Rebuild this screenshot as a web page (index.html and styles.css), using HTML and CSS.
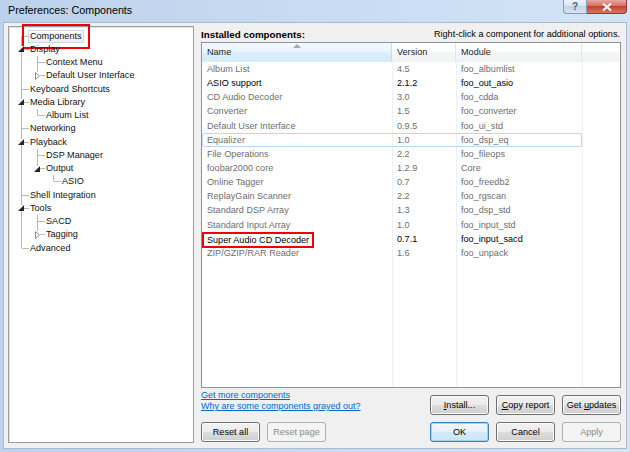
FILE: index.html
```html
<!DOCTYPE html>
<html>
<head>
<meta charset="utf-8">
<title>Preferences: Components</title>
<link rel="stylesheet" href="styles.css">
</head>
<body>
<div class="window">
  <div class="titlebar">
    <span class="title">Preferences: Components</span>
    <div class="caps">
      <div class="cap help">?</div>
      <div class="cap close">
        <svg width="10" height="8" viewBox="0 0 10 8"><path d="M1 0.5 L9 7.5 M9 0.5 L1 7.5" stroke="#fff" stroke-width="2" fill="none"/></svg>
      </div>
    </div>
  </div>
  <div class="client">
    <div class="tree">
      <div class="tn"><i class="c first"></i><span class="lbl sel annot">Components</span></div>
      <div class="tn"><i class="c mid"><svg class="exp-open" width="6" height="6" viewBox="0 0 6 6"><polygon points="6,0 6,6 0,6" fill="#262626"/></svg></i><span class="lbl">Display</span></div>
      <div class="tn"><i class="g v"></i><i class="c mid"></i><span class="lbl">Context Menu</span></div>
      <div class="tn"><i class="g v"></i><i class="c last"><svg class="exp-closed" width="5" height="8" viewBox="0 0 5 8"><polygon points="0.5,0.5 4.5,4 0.5,7.5" fill="#fff" stroke="#8c8c8c" stroke-width="1"/></svg></i><span class="lbl">Default User Interface</span></div>
      <div class="tn"><i class="c mid"></i><span class="lbl">Keyboard Shortcuts</span></div>
      <div class="tn"><i class="c mid"><svg class="exp-open" width="6" height="6" viewBox="0 0 6 6"><polygon points="6,0 6,6 0,6" fill="#262626"/></svg></i><span class="lbl">Media Library</span></div>
      <div class="tn"><i class="g v"></i><i class="c last"></i><span class="lbl">Album List</span></div>
      <div class="tn"><i class="c mid"></i><span class="lbl">Networking</span></div>
      <div class="tn"><i class="c mid"><svg class="exp-open" width="6" height="6" viewBox="0 0 6 6"><polygon points="6,0 6,6 0,6" fill="#262626"/></svg></i><span class="lbl">Playback</span></div>
      <div class="tn"><i class="g v"></i><i class="c mid"></i><span class="lbl">DSP Manager</span></div>
      <div class="tn"><i class="g v"></i><i class="c last"><svg class="exp-open" width="6" height="6" viewBox="0 0 6 6"><polygon points="6,0 6,6 0,6" fill="#262626"/></svg></i><span class="lbl">Output</span></div>
      <div class="tn"><i class="g v"></i><i class="g"></i><i class="c last"></i><span class="lbl">ASIO</span></div>
      <div class="tn"><i class="c mid"></i><span class="lbl">Shell Integration</span></div>
      <div class="tn"><i class="c mid"><svg class="exp-open" width="6" height="6" viewBox="0 0 6 6"><polygon points="6,0 6,6 0,6" fill="#262626"/></svg></i><span class="lbl">Tools</span></div>
      <div class="tn"><i class="g v"></i><i class="c mid"></i><span class="lbl">SACD</span></div>
      <div class="tn"><i class="g v"></i><i class="c last"><svg class="exp-closed" width="5" height="8" viewBox="0 0 5 8"><polygon points="0.5,0.5 4.5,4 0.5,7.5" fill="#fff" stroke="#8c8c8c" stroke-width="1"/></svg></i><span class="lbl">Tagging</span></div>
      <div class="tn"><i class="c last"></i><span class="lbl">Advanced</span></div>
    </div>

    <div class="pane">
      <div class="pane-head">
        <span class="heading">Installed components:</span>
        <span class="hint">Right-click a component for additional options.</span>
      </div>
      <div class="list">
        <div class="list-head">
          <div class="th sorted">Name</div>
          <div class="th">Version</div>
          <div class="th">Module</div>
          <div class="th end"></div>
        </div>
        <div class="list-body">
          <div class="row gray"><span>Album List</span><span>4.5</span><span>foo_albumlist</span></div>
          <div class="row"><span>ASIO support</span><span>2.1.2</span><span>foo_out_asio</span></div>
          <div class="row gray"><span>CD Audio Decoder</span><span>3.0</span><span>foo_cdda</span></div>
          <div class="row gray"><span>Converter</span><span>1.5</span><span>foo_converter</span></div>
          <div class="row gray"><span>Default User Interface</span><span>0.9.5</span><span>foo_ui_std</span></div>
          <div class="row gray focus"><span>Equalizer</span><span>1.0</span><span>foo_dsp_eq</span></div>
          <div class="row gray"><span>File Operations</span><span>2.2</span><span>foo_fileops</span></div>
          <div class="row gray"><span>foobar2000 core</span><span>1.2.9</span><span>Core</span></div>
          <div class="row gray"><span>Online Tagger</span><span>0.7</span><span>foo_freedb2</span></div>
          <div class="row gray"><span>ReplayGain Scanner</span><span>2.2</span><span>foo_rgscan</span></div>
          <div class="row gray"><span>Standard DSP Array</span><span>1.3</span><span>foo_dsp_std</span></div>
          <div class="row gray"><span>Standard Input Array</span><span>1.0</span><span>foo_input_std</span></div>
          <div class="row"><span><b class="annot-cell">Super Audio CD Decoder</b></span><span>0.7.1</span><span>foo_input_sacd</span></div>
          <div class="row gray"><span>ZIP/GZIP/RAR Reader</span><span>1.6</span><span>foo_unpack</span></div>
        </div>
      </div>
      <div class="bottom">
        <div class="brow">
          <div class="links">
            <a href="#">Get more components</a>
            <a href="#">Why are some components grayed out?</a>
          </div>
          <div class="btns top">
            <button class="btn"><u>I</u>nstall...</button>
            <button class="btn"><u>C</u>opy report</button>
            <button class="btn">Get <u>u</u>pdates</button>
          </div>
        </div>
        <div class="brow">
          <div class="btns">
            <button class="btn">Reset all</button>
            <button class="btn" disabled>Reset page</button>
          </div>
          <div class="btns">
            <button class="btn default">OK</button>
            <button class="btn">Cancel</button>
            <button class="btn" disabled>Apply</button>
          </div>
        </div>
      </div>
    </div>
  </div>
</div>
</body>
</html>
```
FILE: styles.css
```css
* { box-sizing: border-box; }
html, body { margin: 0; padding: 0; }
body {
  width: 630px;
  height: 452px;
  overflow: hidden;
  font-family: "Liberation Sans", Arial, sans-serif;
  font-size: 9.1px;
  color: #000;
  background: #c9dbf0;
}
.window {
  width: 630px;
  height: 452px;
  display: flex;
  flex-direction: column;
  background: linear-gradient(to right, #bcd2ec, #d3e4f6);
}
.titlebar {
  height: 22px;
  flex-shrink: 0;
  display: flex;
  align-items: flex-start;
}
.title {
  font-size: 10.7px;
  line-height: 21px;
  padding-left: 8px;
  color: #000;
}
.caps {
  margin-left: auto;
  margin-right: 3px;
  display: flex;
}
.cap {
  height: 14px;
  display: flex;
  align-items: center;
  justify-content: center;
  border: 1px solid;
  border-top: none;
}
.help {
  width: 24px;
  border-color: #8b9bb1;
  border-radius: 0 0 0 4px;
  background: linear-gradient(#eef3f9, #d6e0ec 50%, #c5d3e3 50%, #d9e4f0);
  color: #52607a;
  font-weight: bold;
  font-size: 10px;
  line-height: 13px;
}
.close {
  width: 40px;
  border-color: #8a3b34;
  border-left: none;
  border-radius: 0 0 4px 0;
  background: linear-gradient(#e9a99f, #d86a5e 50%, #c7412f 50%, #d8775f);
}
.client {
  flex: 1;
  margin: 0 3px 3px;
  border: 1px solid #a9bbd0;
  background: #f0f0f0;
  display: flex;
  padding: 3px 5px 5px 4px;
  min-height: 0;
}

/* tree */
.tree {
  width: 186px;
  flex-shrink: 0;
  background: #fff;
  border: 1px solid #9c9c9c;
  box-shadow: inset 1px 1px 0 #e6e6e6;
  padding: 2.4px 0 0 4px;
  --ln: linear-gradient(#b8b8b8, #b8b8b8);
}
.tn {
  height: 13.25px;
  display: flex;
  align-items: center;
  white-space: nowrap;
}
.tn i {
  display: flex;
  align-items: center;
  width: 16px;
  height: 100%;
  flex-shrink: 0;
  font-style: normal;
}
.g.v { background: var(--ln) 8px 0 / 1px 100% no-repeat; }
.c.mid { background: var(--ln) 8px 0 / 1px 100% no-repeat, var(--ln) 9px 50% / 7px 1px no-repeat; }
.c.first { background: var(--ln) 8px 100% / 1px 50% no-repeat, var(--ln) 9px 50% / 7px 1px no-repeat; }
.c.last { background: var(--ln) 8px 0 / 1px 50% no-repeat, var(--ln) 9px 50% / 7px 1px no-repeat; }
.exp-open { margin-left: 5px; background: #fff; }
.exp-closed { margin-left: 6px; background: #fff; }
.lbl {
  display: inline-block;
  line-height: 11px;
  border: 1px solid transparent;
  padding: 0 1px;
  margin-left: -1px;
  color: #111;
}
.lbl.sel {
  border-color: #d0d8e2;
  background: linear-gradient(#fafbfc, #eceff3);
  padding: 0 1px;
}
.annot {
  outline: 2px solid #f00000;
  outline-offset: 4px;
}

/* right pane */
.pane {
  flex: 1;
  margin-left: 7px;
  display: flex;
  flex-direction: column;
  min-width: 0;
}
.pane-head {
  height: 16px;
  display: flex;
  justify-content: space-between;
  align-items: center;
  padding-right: 1px;
}
.heading { font-weight: bold; font-size: 9.8px; }
.hint { color: #000; }

.list {
  height: 346px;
  border: 1px solid #8e9299;
  background: #fff;
  display: flex;
  flex-direction: column;
}
.list-head {
  height: 19px;
  flex-shrink: 0;
  display: grid;
  grid-template-columns: 190px 64px 126px 1fr;
  background: linear-gradient(#ffffff, #ffffff 45%, #f5f6f8 46%, #f1f2f4);
}
.th {
  line-height: 19px;
  padding-left: 5px;
  border-right: 1px solid #e2e5ea;
  color: #1e1e1e;
  white-space: nowrap;
}
.th.end { border-right: none; }
.th.sorted {
  position: relative;
  background: linear-gradient(#f3f9fe, #eaf4fd 45%, #ddeefb 46%, #d6eafa);
  border-right-color: #c8dcef;
}
.th.sorted::after {
  content: "";
  position: absolute;
  top: 1px;
  left: 91px;
  border-left: 4px solid transparent;
  border-right: 4px solid transparent;
  border-bottom: 4px solid #9aaac0;
}
.list-body {
  flex: 1;
  background:
    linear-gradient(#edf0f4, #edf0f4) 190px 0 / 1px 100% no-repeat,
    linear-gradient(#edf0f4, #edf0f4) 254px 0 / 1px 100% no-repeat,
    linear-gradient(#edf0f4, #edf0f4) 380px 0 / 1px 100% no-repeat;
}
.row {
  width: 380px;
  height: 14.15px;
  display: grid;
  grid-template-columns: 190px 64px 126px;
  line-height: 14.15px;
  color: #000;
}
.row.gray { color: #6e6e6e; }
.row span {
  padding-left: 5px;
  white-space: nowrap;
}
.row.focus {
  box-shadow: inset 0 0 0 1px #bcd7f3;
  border-radius: 2px;
}
.annot-cell {
  display: inline-block;
  font-weight: normal;
  margin-left: -5px;
  padding: 0 3px;
  border: 2px solid #f00000;
  line-height: 12px;
}

/* bottom */
.bottom {
  margin-top: 2px;
  display: flex;
  flex-direction: column;
  gap: 7px;
}
.brow {
  display: flex;
  justify-content: space-between;
  align-items: flex-start;
}
.links {
  display: flex;
  flex-direction: column;
  line-height: 11px;
  font-size: 9px;
}
.links a { color: #0066cc; text-decoration: underline; }
.btns {
  display: flex;
  gap: 7px;
}
.btns.top { margin-top: 5px; }
.btn {
  width: 59px;
  height: 20px;
  padding: 0;
  font-family: "Liberation Sans", Arial, sans-serif;
  font-size: 9.1px;
  color: #000;
  border: 1px solid #707070;
  border-radius: 3px;
  background: linear-gradient(#f2f2f2, #ebebeb 48%, #dddddd 52%, #cfcfcf);
  box-shadow: inset 0 0 0 1px #fbfbfb;
}
.btn.default {
  border-color: #3c7fb1;
  background: linear-gradient(#f3f9fd, #e4f1fb 48%, #d4e9f9 52%, #cfe6f8);
  box-shadow: inset 0 0 0 1px #9bd3f3;
}
.btn:disabled {
  border-color: #adb2b5;
  background: #f4f4f4;
  color: #8a8a8a;
  box-shadow: none;
}
```
